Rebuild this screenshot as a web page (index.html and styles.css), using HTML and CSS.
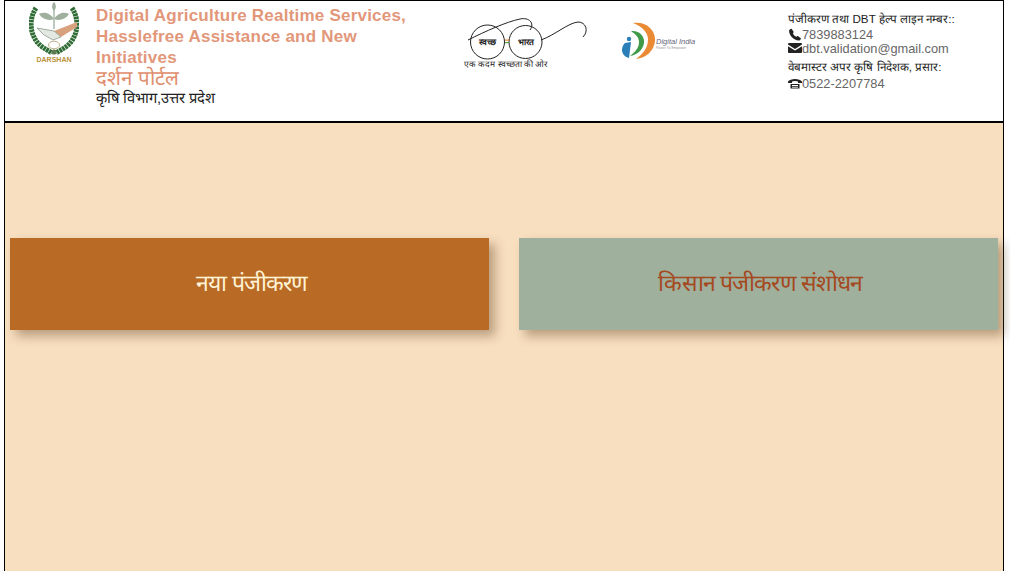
FILE: index.html
```html
<!DOCTYPE html>
<html lang="hi">
<head>
<meta charset="utf-8">
<title>दर्शन पोर्टल</title>
<link rel="stylesheet" href="styles.css">
</head>
<body>
<div class="frame">
  <header class="header">
    <div class="logo-cell">
      <svg class="darshan-logo" viewBox="0 0 50 66" width="50" height="66">
        <g fill="none" stroke="#2f6b35" stroke-width="5" stroke-dasharray="2.600 .6">
          <path d="M7 6C-1 18 1 35 12 44C16 47 20 49 23 51"/>
          <path d="M43 6C51 18 49 35 38 44C34 47 30 49 27 51"/>
        </g>
        <path d="M25 27V6" stroke="#7f9580" stroke-width="1" fill="none"/>
        <path d="M25 17C20 10 14 10 10 12C14 18 20 19 25 17ZM25 17C30 10 36 10 40 12C36 18 30 19 25 17ZM25 9C22 6 23 2 25 0C27 2 28 6 25 9Z" fill="#9fb09d"/>
        <path d="M25 29L48 20V25L32 35Z" fill="#d9a27f"/>
        <path d="M8 26L25 29L32 35L24 38L15 33Z" fill="#e4e8e2" stroke="#7f8f80" stroke-width=".7"/>
        <ellipse cx="25" cy="43" rx="5.500" ry="3.800" fill="#fff" stroke="#a89a68" stroke-width=".8"/>
        <circle cx="25" cy="50" r="2.600" fill="#5d7a50"/>
        <text class="logo-word" x="25" y="60" text-anchor="middle">DARSHAN</text>
      </svg>
    </div>
    <div class="title-cell">
      <h1 class="title-en">Digital Agriculture Realtime Services, Hasslefree Assistance and New Initiatives</h1>
      <div class="title-hi">दर्शन पोर्टल</div>
      <div class="title-dept">कृषि विभाग,उत्तर प्रदेश</div>
    </div>
    <div class="swachh-cell">
      <svg viewBox="0 0 130 56" width="130" height="56">
        <g fill="none" stroke="#222" stroke-width="1">
          <circle cx="29.500" cy="26" r="17"/>
          <circle cx="67.500" cy="26" r="16.500"/>
          <path d="M10 24C28 15 48 6 62 3C71 1 77 7 72 14"/>
          <path d="M83 24C97 19 110 7 120 6C128 6 131 15 125 21"/>
        </g>
        <rect x="47" y="23.500" width="4" height="1.200" fill="#e98a2c"/>
        <rect x="47" y="26" width="4" height="1.200" fill="#5aa04a"/>
        <text class="swachh-word" x="29.500" y="29" text-anchor="middle">स्वच्छ</text>
        <text class="swachh-word" x="67.500" y="29" text-anchor="middle">भारत</text>
        <text class="swachh-tag" x="6" y="51">एक कदम स्वच्छता की ओर</text>
      </svg>
    </div>
    <div class="digital-cell">
      <svg viewBox="0 0 76 38" width="76" height="38">
        <path d="M12 1C25 -1 35 8 34 19C33 29 25 36 15 37C22 32 27 26 27 17C27 10 20 4 12 1Z" fill="#ea8a34"/>
        <path d="M10 9C18 8 24 14 23 21C22 28 16 33 9 34C14 30 18 26 18 20C18 15 14 12 10 9Z" fill="#3f9a4a"/>
        <circle cx="8" cy="17" r="2.200" fill="#2a7fb8"/>
        <path d="M4 21L10 20L8 36C4 35 1 32 1 28C1 25 2 23 4 21Z" fill="#2a7fb8"/>
        <text class="digital-word" x="35" y="22">Digital India</text>
        <text class="digital-sub" x="35" y="27">Power To Empower</text>
      </svg>
    </div>
    <div class="contact-cell">
      <div class="contact-head">पंजीकरण तथा DBT हेल्प लाइन नम्बर::</div>
      <div class="contact-line contact-phone">
        <svg class="icon" viewBox="0 0 14 14" width="14" height="13"><path d="M3.200 .8L5.400 3.800C5.800 4.400 5.400 5 4.800 5.600C5.400 7.400 6.800 8.800 8.600 9.400C9.200 8.800 9.800 8.400 10.400 8.800L13.300 11C13.700 11.400 13 13 11.600 13.400C6 13.800 .4 8.200 .6 2.800C1 1.400 2.700 .4 3.200 .8Z" fill="#222"/></svg><span>7839883124</span>
      </div>
      <div class="contact-line">
        <svg class="icon" viewBox="0 0 14 12" width="14" height="12"><path d="M1 1H13C13.500 1 14 1.500 14 2V2.600L7 7L0 2.600V2C0 1.500 .5 1 1 1ZM0 4.200L7 8.600L14 4.200V10C14 10.600 13.500 11 13 11H1C.5 11 0 10.600 0 10Z" fill="#222"/></svg><span>dbt.validation@gmail.com</span>
      </div>
      <div class="contact-head contact-head-second">वेबमास्टर अपर कृषि निदेशक, प्रसार:</div>
      <div class="contact-line contact-gap">
        <svg class="icon" viewBox="0 0 14 12" width="14" height="12"><path d="M0 4.500C2 1 12 1 14 4.500V6H10V4.500C8.500 3.800 5.500 3.800 4 4.500V6H0Z" fill="#222"/><rect x="2.500" y="7" width="9" height="4.500" fill="#222"/><rect x="4" y="8" width="6" height="1" fill="#fff"/><rect x="4" y="9.800" width="6" height=".8" fill="#fff"/></svg><span>0522-2207784</span>
      </div>
    </div>
  </header>
  <main class="actions">
    <a class="action action-new" href="#">नया पंजीकरण</a>
    <a class="action action-edit" href="#">किसान पंजीकरण संशोधन</a>
  </main>
</div>
</body>
</html>
```
FILE: styles.css
```css
html, body {
  margin: 0;
  height: 100%;
  overflow: hidden;
  background: #fff;
}
body {
  font-family: "Liberation Sans", Arial, sans-serif;
  color: #222;
}
.frame {
  box-sizing: border-box;
  width: 1000px;
  height: 571px;
  margin-left: 4px;
  border: 1px solid #000;
  border-bottom: 0;
  background: #f8dfbf;
  display: flex;
  flex-direction: column;
}
.header {
  box-sizing: border-box;
  height: 122px;
  flex: none;
  background: #fff;
  border-bottom: 2px solid #000;
  display: flex;
  align-items: flex-start;
}
.logo-cell {
  width: 91px;
  flex: none;
  padding: 1px 0 0 24px;
  box-sizing: border-box;
}
.darshan-logo { display: block; }
.logo-word {
  font: 700 7px "Liberation Sans", Arial, sans-serif;
  fill: #b9923a;
}
.title-cell {
  width: 362px;
  flex: none;
  box-sizing: border-box;
  padding-top: 4px;
}
.title-en {
  margin: 0;
  width: 320px;
  font-size: 17px;
  line-height: 21px;
  font-weight: 700;
  color: #e2977a;
  letter-spacing: 0.22px;
}
.title-hi {
  font-size: 20.500px;
  line-height: 20px;
  color: #e08f6e;
}
.title-dept {
  font-size: 14.700px;
  line-height: 20px;
  color: #222;
}
.swachh-cell {
  width: 163px;
  flex: none;
  padding-top: 15px;
  box-sizing: border-box;
}
.swachh-cell svg, .digital-cell svg { display: block; }
.swachh-word {
  font-size: 8.500px;
  font-weight: 700;
  fill: #222;
}
.swachh-tag {
  font-size: 8.500px;
  fill: #222;
}
.digital-cell {
  width: 167px;
  flex: none;
  padding-top: 21px;
  box-sizing: border-box;
}
.digital-word {
  font: italic 7.500px "Liberation Sans", Arial, sans-serif;
  fill: #667;
}
.digital-sub {
  font: 3.500px "Liberation Sans", Arial, sans-serif;
  fill: #999;
}
.contact-cell {
  padding-top: 10px;
  min-width: 0;
}
.contact-head {
  font-size: 11.650px;
  line-height: 15px;
  color: #222;
  white-space: nowrap;
}
.contact-head-second { margin-top: 4px; }
.contact-line {
  display: flex;
  align-items: center;
  height: 14px;
  font-size: 12.800px;
  color: #666;
  white-space: nowrap;
}
.contact-phone {
  height: 13px;
  margin-top: 2px;
}
.contact-gap { margin-top: 2px; }
.icon { flex: none; }
.actions {
  flex: 1;
  padding: 115px 5px 0;
  display: flex;
  gap: 30px;
  align-items: flex-start;
}
.action {
  flex: 1;
  box-sizing: border-box;
  height: 92px;
  padding: 0 0 5px 4px;
  display: flex;
  align-items: center;
  justify-content: center;
  font-size: 23px;
  letter-spacing: -0.9px;
  text-decoration: none;
  box-shadow: 6px 6px 10px rgba(90, 60, 30, 0.4);
}
.action-new {
  background: #b96a25;
  color: #fff3d6;
}
.action-edit {
  background: #9fb09d;
  color: #a5491f;
}
```
